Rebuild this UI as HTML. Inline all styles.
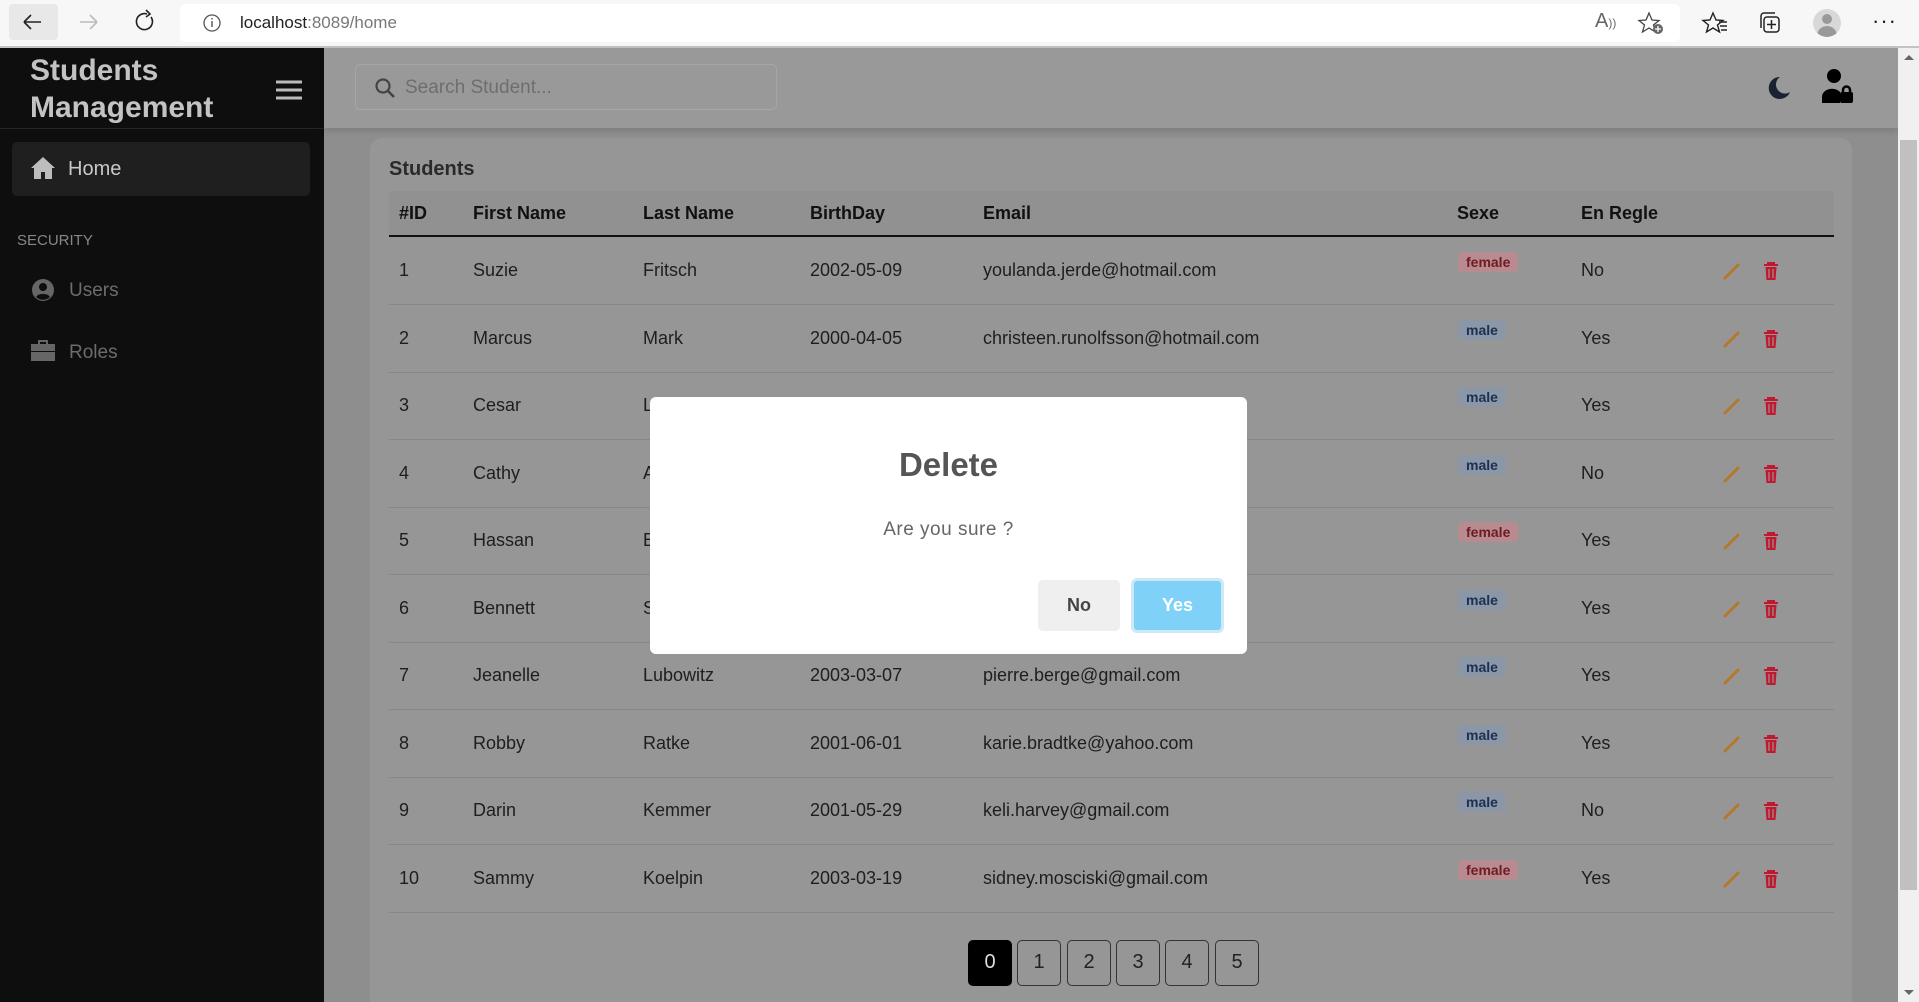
<!DOCTYPE html>
<html style="overflow:hidden;width:1919px;height:1002px"><head><meta charset="utf-8"><style>
*{box-sizing:border-box;margin:0;padding:0}
body{width:1919px;height:1002px;overflow:hidden;position:relative;font-family:"Liberation Sans",sans-serif;background:#8e8e8e}
.abs{position:absolute}
.bar{left:0;top:0;width:1919px;height:48px;background:#f7f7f7;border-bottom:2px solid #c4c4c4}
.side{left:0;top:48px;width:324px;height:954px;background:#0e0e0e}
.hdr{left:324px;top:48px;width:1574px;height:80px;background:#999;box-shadow:0 3px 6px rgba(0,0,0,.12)}
.card{left:370px;top:138px;width:1482px;height:864px;background:#969696;border-radius:12px 12px 0 0}
.t{position:absolute;font-size:18px;color:#1e1e1e;white-space:nowrap}
.th{position:absolute;font-size:18px;font-weight:bold;color:#111;top:203px}
.rowline{position:absolute;left:389px;width:1445px;height:1px;background:#878787}
.badge{position:absolute;left:1458px;height:20px;border-radius:4px;font-size:14px;font-weight:bold;line-height:20px;padding:0 8px}
.f{background:#b78b8f;color:#701a22}
.m{background:#8b96a7;color:#1c3052}
.pg{position:absolute;top:940px;width:44px;height:46px;border:1.5px solid #333;border-radius:5px;font-size:20px;line-height:43px;text-align:center;color:#222}
</style></head><body>
<div class="abs bar"></div>
<div class="abs" style="left:9px;top:4px;width:49px;height:36px;background:#e8e8e8;border-radius:4px"></div>
<svg class="abs" style="left:0;top:0" width="180" height="48"><path d="M24 22h17M24 22l7-7M24 22l7 7" stroke="#222" stroke-width="1.6" fill="none"/><path d="M80 22h17M97 22l-7-7M97 22l-7 7" stroke="#bbb" stroke-width="1.6" fill="none"/><path d="M151 17a8 8 0 1 1-4-3" stroke="#222" stroke-width="1.6" fill="none"/><path d="M146 10l4 4-4 3" stroke="#222" stroke-width="1.6" fill="none"/></svg>
<div class="abs" style="left:180px;top:4px;width:1500px;height:38px;background:#fff;border-radius:6px"></div>
<svg class="abs" style="left:200px;top:12px" width="24" height="24"><circle cx="12" cy="11" r="8" stroke="#555" stroke-width="1.3" fill="none"/><path d="M12 9v6M12 6v1.5" stroke="#555" stroke-width="1.4"/></svg>
<div class="abs" style="left:240px;top:13px;font-size:17px;color:#222">localhost<span style="color:#777">:8089/home</span></div>
<div class="abs" style="left:1595px;top:10px;font-size:20px;color:#666">A<span style="font-size:12px">))</span></div>
<svg class="abs" style="left:1636px;top:10px" width="30" height="26"><path d="M13 3l3 7 7 .5-5.5 4.5 2 7-6.5-4-6.5 4 2-7L3 10.5l7-.5z" stroke="#444" stroke-width="1.3" fill="none"/><circle cx="22" cy="19" r="5" fill="#666"/><path d="M22 16v6M19 19h6" stroke="#fff" stroke-width="1.3"/></svg>
<svg class="abs" style="left:1700px;top:10px" width="30" height="26"><path d="M13 3l3 7 7 .5-5.5 4.5 2 7-6.5-4-6.5 4 2-7L3 10.5l7-.5z" stroke="#222" stroke-width="1.4" fill="none"/><path d="M19 12h8M20 16h7M21 20h6" stroke="#222" stroke-width="1.4"/></svg>
<svg class="abs" style="left:1757px;top:10px" width="28" height="26"><rect x="7" y="7" width="15" height="15" rx="3" stroke="#222" stroke-width="1.5" fill="none"/><path d="M4 18V6a3 3 0 0 1 3-3h11" stroke="#222" stroke-width="1.5" fill="none"/><path d="M14.5 10v9M10 14.5h9" stroke="#222" stroke-width="1.5"/></svg>
<div class="abs" style="left:1813px;top:9px;width:28px;height:28px;border-radius:50%;background:#d8d8d8;overflow:hidden"><div class="abs" style="left:9px;top:5px;width:10px;height:10px;border-radius:50%;background:#999"></div><div class="abs" style="left:4px;top:17px;width:20px;height:14px;border-radius:10px 10px 0 0;background:#999"></div></div>
<div class="abs" style="left:1872px;top:8px;font-size:22px;color:#222;letter-spacing:1px">···</div>

<div class="abs side"></div>
<div class="abs" style="left:0;top:128px;width:324px;height:1px;background:#262626"></div>
<div class="abs" style="left:30px;top:52px;font-size:30px;font-weight:bold;color:#c3c3c3;line-height:37px">Students<br>Management</div>
<svg class="abs" style="left:276px;top:80px" width="26" height="20"><path d="M0 2h26M0 10h26M0 18h26" stroke="#bbb" stroke-width="3"/></svg>
<div class="abs" style="left:12px;top:142px;width:298px;height:54px;background:#1f1f1f;border-radius:5px"></div>
<svg class="abs" style="left:30px;top:156px" width="26" height="24"><path d="M13 1L1 12h3v11h7v-7h4v7h7V12h3z" fill="#bdbdbd"/></svg>
<div class="abs" style="left:68px;top:158px;font-size:20px;color:#c8c8c8">Home</div>
<div class="abs" style="left:17px;top:232px;font-size:15px;color:#878787">SECURITY</div>
<svg class="abs" style="left:31px;top:278px" width="24" height="24"><circle cx="12" cy="12" r="11" fill="#666"/><circle cx="12" cy="9" r="4" fill="#0e0e0e"/><path d="M5 19a8 6 0 0 1 14 0a10 10 0 0 1-14 0z" fill="#0e0e0e"/></svg>
<div class="abs" style="left:69px;top:280px;font-size:19px;color:#6c6c6c">Users</div>
<svg class="abs" style="left:30px;top:339px" width="26" height="24"><path d="M9 5V2h8v3" stroke="#666" stroke-width="2" fill="none"/><rect x="1" y="5" width="24" height="7" fill="#666"/><rect x="1" y="13" width="24" height="9" fill="#666"/></svg>
<div class="abs" style="left:69px;top:342px;font-size:19px;color:#6c6c6c">Roles</div>

<div class="abs hdr"></div>
<div class="abs" style="left:355px;top:64px;width:422px;height:46px;border:1px solid #a6a6a6;border-radius:5px;background:#999"></div>
<svg class="abs" style="left:374px;top:77px" width="24" height="24"><circle cx="9" cy="9" r="6.5" stroke="#444" stroke-width="2.2" fill="none"/><path d="M14 14l6 6" stroke="#444" stroke-width="2.6"/></svg>
<div class="abs" style="left:405px;top:77px;font-size:19px;color:#6e6e6e">Search Student...</div>
<svg class="abs" style="left:1764px;top:74px" width="28" height="28"><path d="M16 3a11 11 0 1 0 10 15A9 9 0 0 1 16 3z" fill="#1b2232"/></svg>
<svg class="abs" style="left:1820px;top:68px" width="36" height="36"><circle cx="14" cy="8" r="7" fill="#000"/><path d="M2 35v-6a10 8 0 0 1 18-5v11z" fill="#000"/><rect x="20" y="24" width="13" height="11" rx="2" fill="#000"/><path d="M23 25v-3a3.5 3.5 0 0 1 7 0v3" stroke="#000" stroke-width="2.5" fill="none"/></svg>

<div class="abs card"></div>
<div class="abs" style="left:389px;top:158px;font-size:20px;font-weight:bold;color:#2a2a2a">Students</div>
<div class="abs" style="left:389px;top:191px;width:1445px;height:45px;background:#919191"></div>
<div class="abs" style="left:389px;top:235px;width:1445px;height:2px;background:#111"></div>
<div class="th" style="left:399px">#ID</div><div class="th" style="left:473px">First Name</div><div class="th" style="left:643px">Last Name</div><div class="th" style="left:810px">BirthDay</div><div class="th" style="left:983px">Email</div><div class="th" style="left:1457px">Sexe</div><div class="th" style="left:1581px">En Regle</div>

<div id="rows"></div>
<script>
var d=[["1","Suzie","Fritsch","2002-05-09","youlanda.jerde@hotmail.com","f","No"],
["2","Marcus","Mark","2000-04-05","christeen.runolfsson@hotmail.com","m","Yes"],
["3","Cesar","Larkin","2001-02-11","cesar.larkin@gmail.com","m","Yes"],
["4","Cathy","Ankunding","2002-08-21","cathy.ank@gmail.com","m","No"],
["5","Hassan","Bauch","2000-11-02","hassan.bauch@yahoo.com","f","Yes"],
["6","Bennett","Schmidt","2003-01-17","bennett.s@gmail.com","m","Yes"],
["7","Jeanelle","Lubowitz","2003-03-07","pierre.berge@gmail.com","m","Yes"],
["8","Robby","Ratke","2001-06-01","karie.bradtke@yahoo.com","m","Yes"],
["9","Darin","Kemmer","2001-05-29","keli.harvey@gmail.com","m","No"],
["10","Sammy","Koelpin","2003-03-19","sidney.mosciski@gmail.com","f","Yes"]];
var h="",xs=[399,473,643,810,983];
for(var i=0;i<10;i++){var c=269+i*67.5,r=d[i];
for(var j=0;j<5;j++)h+='<div class="t" style="left:'+xs[j]+'px;top:'+(c-9)+'px">'+r[j]+'</div>';
h+='<div class="badge '+r[5]+'" style="top:'+(c-17)+'px">'+(r[5]=="f"?"female":"male")+'</div>';
h+='<div class="t" style="left:1581px;top:'+(c-9)+'px">'+r[6]+'</div>';
h+='<svg class="abs" style="left:1722px;top:'+(c-8)+'px" width="20" height="20"><path d="M3 17L16 4" stroke="#b4782c" stroke-width="3" stroke-linecap="round"/></svg>';
h+='<svg class="abs" style="left:1763px;top:'+(c-8)+'px" width="16" height="20"><path d="M1 4h14M5 4V2h6v2" stroke="#c0182e" stroke-width="2" fill="none"/><path d="M2.5 6h11l-1 13h-9z" fill="#c0182e"/><path d="M6 8v9M10 8v9" stroke="#969696" stroke-width="1.2"/></svg>';
h+='<div class="rowline" style="top:'+Math.round(c+35)+'px"></div>';}
document.getElementById("rows").innerHTML=h;
</script>
<div class="pg" style="left:968px;background:#000;color:#ddd;border-color:#000">0</div>
<div class="pg" style="left:1017px">1</div><div class="pg" style="left:1067px">2</div><div class="pg" style="left:1116px">3</div><div class="pg" style="left:1165px">4</div><div class="pg" style="left:1215px">5</div>

<div class="abs" style="left:1898px;top:48px;width:21px;height:954px;background:#f0f0f0"></div>
<div class="abs" style="left:1900px;top:140px;width:17px;height:750px;background:#c0c0c0"></div>
<svg class="abs" style="left:1900px;top:50px" width="18" height="952"><path d="M4 10h10L9 5z" fill="#666"/><path d="M4 940h10l-5 5z" fill="#666"/></svg>

<div class="abs" style="left:650px;top:397px;width:597px;height:257px;background:#fff;border-radius:6px"></div>
<div class="abs" style="left:650px;top:446px;width:597px;text-align:center;font-size:33px;font-weight:bold;color:#555">Delete</div>
<div class="abs" style="left:650px;top:519px;width:597px;text-align:center;font-size:19px;color:#666;letter-spacing:.5px">Are you sure ?</div>
<div class="abs" style="left:1038px;top:580px;width:82px;height:51px;background:#efefef;border-radius:5px;text-align:center;line-height:51px;font-size:18px;font-weight:bold;color:#444">No</div>
<div class="abs" style="left:1131px;top:578px;width:93px;height:55px;border:3px solid #cde9f8;border-radius:6px;background:#7fd1f8;text-align:center;line-height:49px;font-size:18px;font-weight:bold;color:#fff">Yes</div>
</body></html>
